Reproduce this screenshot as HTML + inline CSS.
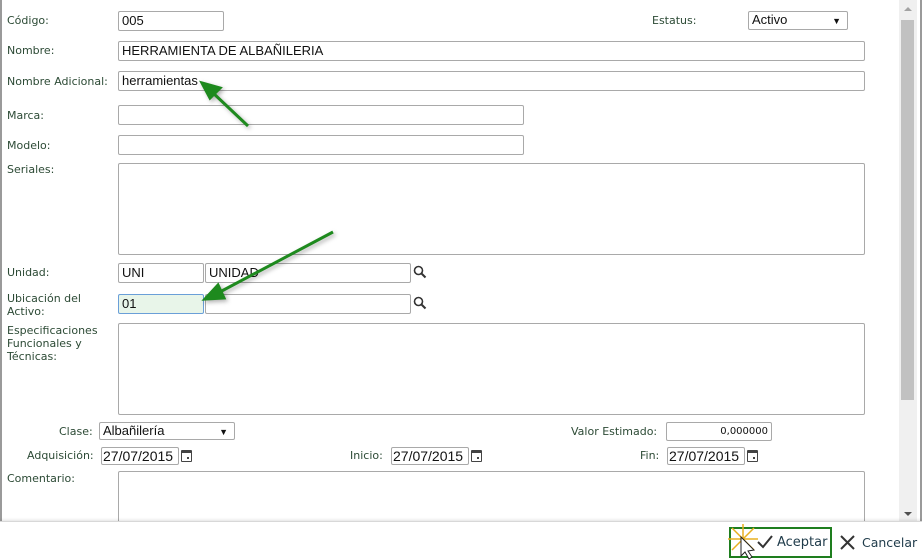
<!DOCTYPE html>
<html><head><meta charset="utf-8"><style>
*{box-sizing:border-box;margin:0;padding:0}
body{width:922px;height:560px;overflow:hidden;background:#fff;font-family:Verdana,"DejaVu Sans",sans-serif;position:relative}
.l{position:absolute;font-size:11px;color:#2c4a35;line-height:13px}
.i{position:absolute;border:1px solid #a9a9a9;border-radius:2px;background:#fff;font-family:"Liberation Sans",Arial,sans-serif;font-size:13px;color:#111;padding:0 3px;line-height:18px;height:20px}
.d{position:absolute;border:1px solid #a9a9a9;border-radius:2px;font-family:"Liberation Sans",Arial,sans-serif;font-size:14px;height:18px;line-height:16px;padding:0 1px;color:#111;overflow:hidden;white-space:nowrap}
.cal{position:absolute;width:11px;height:12px;background:#444;border-radius:1px}
.cal:after{content:"";position:absolute;left:1px;top:3px;width:9px;height:8px;background:#fff}
.cal:before{content:"";position:absolute;left:6px;top:7px;width:2px;height:2px;background:#444;z-index:1}
.sel:after{content:"▼";position:absolute;right:6px;top:1px;font-size:9px}
</style></head><body>
<div style="position:absolute;left:0;top:0;width:2px;height:522px;background:#9a9a9a"></div>
<div style="position:absolute;right:0;top:0;width:2px;height:522px;background:#9a9a9a"></div>

<div class="l" style="left:7px;top:14px">Código:</div>
<div class="i" style="left:118px;top:11px;width:106px">005</div>
<div class="l" style="left:652px;top:14px">Estatus:</div>
<div class="i sel" style="left:748px;top:11px;width:100px;height:19px;line-height:16px">Activo</div>

<div class="l" style="left:7px;top:44px">Nombre:</div>
<div class="i" style="left:118px;top:41px;width:747px">HERRAMIENTA DE ALBAÑILERIA</div>
<div class="l" style="left:7px;top:75px">Nombre Adicional:</div>
<div class="i" style="left:118px;top:71px;width:747px">herramientas</div>
<div class="l" style="left:7px;top:109px">Marca:</div>
<div class="i" style="left:118px;top:105px;width:406px"></div>
<div class="l" style="left:7px;top:139px">Modelo:</div>
<div class="i" style="left:118px;top:135px;width:406px"></div>
<div class="l" style="left:7px;top:163px">Seriales:</div>
<div class="i" style="left:118px;top:163px;width:747px;height:92px"></div>

<div class="l" style="left:7px;top:266px">Unidad:</div>
<div class="i" style="left:118px;top:263px;width:86px">UNI</div>
<div class="i" style="left:205px;top:263px;width:206px">UNIDAD</div>
<div class="l" style="left:7px;top:292px">Ubicación del<br>Activo:</div>
<div class="i" style="left:118px;top:294px;width:86px;background:#e8f5e9;border-color:#6a9fd8">01</div>
<div class="i" style="left:205px;top:294px;width:206px"></div>
<svg style="position:absolute;left:413px;top:265px" width="14" height="14"><circle cx="5.5" cy="5.5" r="4" fill="none" stroke="#333" stroke-width="1.6"/><path d="M8.5 8.5L12.5 12.5" stroke="#333" stroke-width="2"/></svg>
<svg style="position:absolute;left:413px;top:296px" width="14" height="14"><circle cx="5.5" cy="5.5" r="4" fill="none" stroke="#333" stroke-width="1.6"/><path d="M8.5 8.5L12.5 12.5" stroke="#333" stroke-width="2"/></svg>

<div class="l" style="left:7px;top:324px">Especificaciones<br>Funcionales y<br>Técnicas:</div>
<div class="i" style="left:118px;top:323px;width:747px;height:92px"></div>

<div class="l" style="left:59px;top:425px">Clase:</div>
<div class="i sel" style="left:99px;top:422px;width:136px;height:18px;line-height:16px">Albañilería</div>
<div class="l" style="left:571px;top:425px">Valor Estimado:</div>
<div class="i" style="left:666px;top:422px;width:106px;height:19px;line-height:17px;text-align:right;font-family:Verdana,'DejaVu Sans',sans-serif;font-size:10px">0,000000</div>

<div class="l" style="left:27px;top:449px">Adquisición:</div>
<div class="d" style="left:101px;top:447px;width:78px">27/07/2015</div><div class="cal" style="left:181px;top:450px"></div>
<div class="l" style="left:350px;top:449px">Inicio:</div>
<div class="d" style="left:391px;top:447px;width:78px">27/07/2015</div><div class="cal" style="left:471px;top:450px"></div>
<div class="l" style="left:640px;top:449px">Fin:</div>
<div class="d" style="left:667px;top:447px;width:78px">27/07/2015</div><div class="cal" style="left:747px;top:450px"></div>

<div class="l" style="left:7px;top:472px">Comentario:</div>
<div class="i" style="left:118px;top:471px;width:747px;height:60px"></div>

<div style="position:absolute;left:899px;top:0;width:18px;height:522px;background:#f0f0f0"></div>
<div style="position:absolute;left:901px;top:20px;width:13px;height:380px;background:#c1c1c1"></div>
<div style="position:absolute;left:904px;top:7px;width:0;height:0;border:4px solid transparent;border-bottom-color:#a3a3a3;border-top:0"></div>
<div style="position:absolute;left:904px;top:512px;width:0;height:0;border:4px solid transparent;border-top-color:#505050;border-bottom:0"></div>

<div style="position:absolute;left:0;top:521px;width:922px;height:39px;background:#fff;border-top:1px solid #d8d8d8;box-shadow:0 -1px 3px rgba(0,0,0,.12)"></div>
<div style="position:absolute;left:729px;top:527px;width:103px;height:31px;border:2px solid #1e7e1e"></div>
<svg style="position:absolute;left:756px;top:534px" width="18" height="16"><path d="M2 8L7 13L16 2" fill="none" stroke="#333" stroke-width="2"/></svg>
<div style="position:absolute;left:777px;top:535px;font-size:13px;color:#1f3b4a;font-family:Verdana,'DejaVu Sans',sans-serif">Aceptar</div>
<svg style="position:absolute;left:839px;top:534px" width="17" height="17"><path d="M2 2L15 15M15 2L2 15" stroke="#333" stroke-width="2"/></svg>
<div style="position:absolute;left:862px;top:535px;font-size:12.5px;color:#1f3b4a;font-family:Verdana,'DejaVu Sans',sans-serif">Cancelar</div>
<svg style="position:absolute;left:728px;top:524px" width="34" height="36"><g stroke="#e8b020" stroke-width="1.5"><path d="M4 4L26 26M26 4L4 26M15 0L15 30M0 15L30 15"/></g><path d="M13 13L13 32L17 28L21 35L24 33L20 27L26 26Z" fill="#fff" stroke="#222"/></svg>

<svg style="position:absolute;left:0;top:0" width="922" height="522">
<g stroke="#1e8a1e" stroke-width="3" fill="#1e8a1e" style="filter:drop-shadow(2px 2px 2px rgba(0,0,0,.3))">
<path d="M248 126L212 92"/><path d="M202 83L220 88L210 98Z"/>
<path d="M333 232L218 293"/><path d="M205 299L218 285L224 298Z"/>
</g></svg>
</body></html>
